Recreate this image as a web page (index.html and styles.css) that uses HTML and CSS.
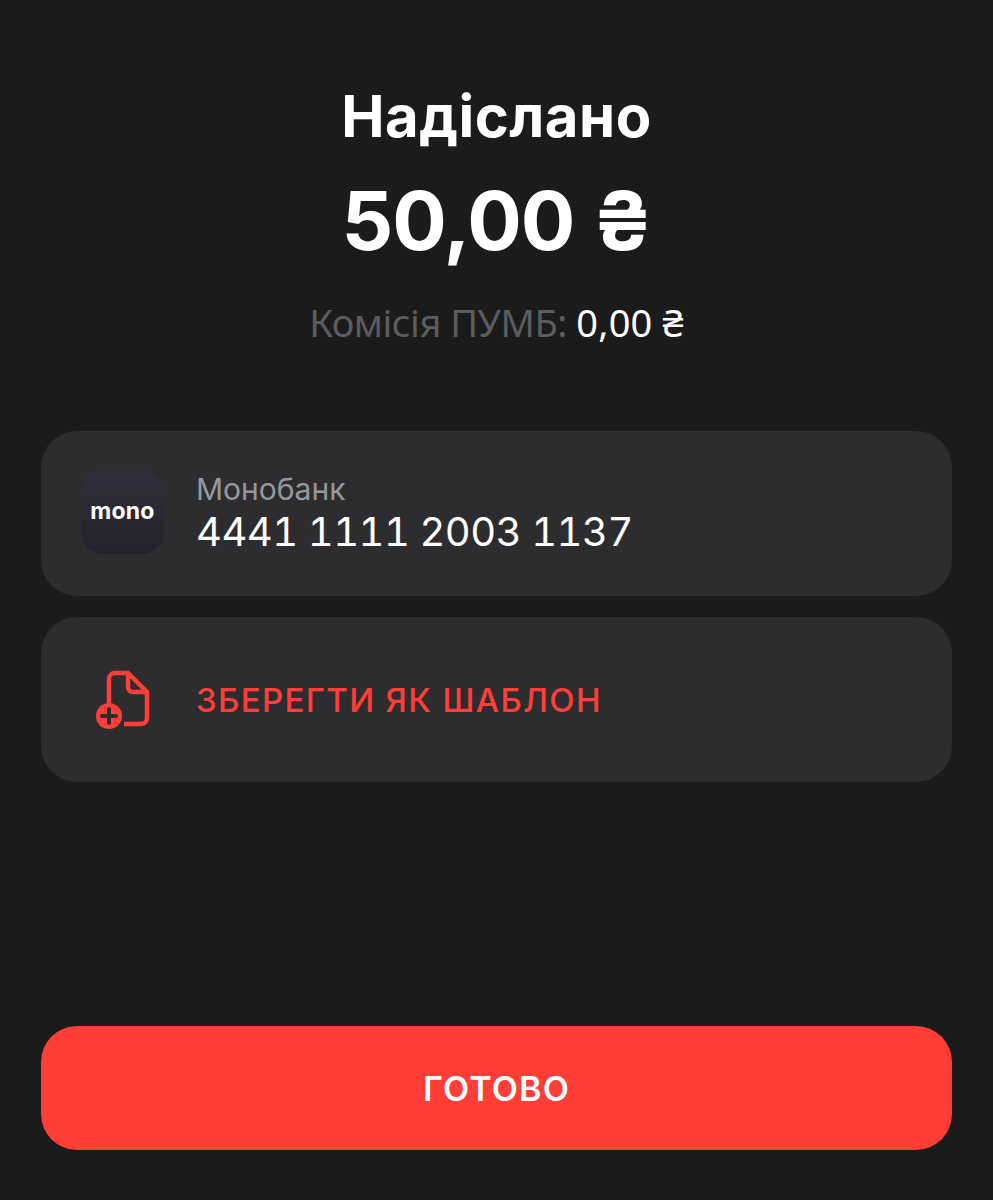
FILE: index.html
```html
<!DOCTYPE html>
<html lang="uk">
<head>
    <meta charset="UTF-8">
    <meta name="viewport" content="width=device-width, initial-scale=1.0">
    <title>Надіслано</title>
    <link rel="stylesheet" href="styles.css">
</head>
<body>
    <div class="page">
        <div class="summary">
            <h1 class="title">Надіслано</h1>
            <div class="amount">50,00 ₴</div>
            <div class="fee"><span class="fee-label">Комісія ПУМБ:</span> <span class="fee-value">0,00 ₴</span></div>
        </div>

        <div class="card">
            <div class="bank-logo"><span class="bank-logo-text">mono</span></div>
            <div class="card-text">
                <div class="bank-name">Монобанк</div>
                <div class="card-number">4441 1111 2003 1137</div>
            </div>
        </div>

        <div class="card card-action">
            <svg class="template-icon" width="56" height="60" viewBox="0 0 56 60" fill="none">
                <path d="M14 33V9a6 6 0 0 1 6-6h13l19 19v26a6 6 0 0 1-6 6H29" stroke="#ff3e38" stroke-width="4.5" stroke-linejoin="round"/>
                <path d="M33 4v13a5 5 0 0 0 5 5h13" stroke="#ff3e38" stroke-width="4.5" stroke-linejoin="round"/>
                <circle cx="14" cy="46" r="13" fill="#ff3e38"/>
                <path d="M14 39v14M7 46h14" stroke="#2d2d30" stroke-width="4" stroke-linecap="round"/>
            </svg>
            <div class="action-label">ЗБЕРЕГТИ ЯК ШАБЛОН</div>
        </div>

        <button class="done">ГОТОВО</button>
    </div>
</body>
</html>
```

FILE: styles.css
```css
html, body {
    margin: 0;
    background-color: #1b1b1b;
}
.page {
    height: 1200px;
    box-sizing: border-box;
    padding: 0 41px;
    display: flex;
    flex-direction: column;
    font-family: "Inter", "Liberation Sans", sans-serif;
    color: #fff;
    overflow: hidden;
}
.summary {
    height: 431px;
    padding-top: 81px;
    box-sizing: border-box;
    text-align: center;
    flex: none;
}
.title {
    margin: 0;
    font-size: 58px;
    line-height: 70px;
    font-weight: 700;
    letter-spacing: 0.5px;
}
.amount {
    margin-top: 22px;
    font-size: 81px;
    line-height: 96px;
    font-weight: 700;
    letter-spacing: -1px;
}
.fee {
    margin-top: 28px;
    font-family: "Noto Sans", sans-serif;
    font-size: 38px;
    line-height: 50px;
    letter-spacing: -0.5px;
}
.fee-label {
    color: #5b5c5f;
}
.fee-value {
    letter-spacing: 0.2px;
}
.card {
    height: 165px;
    flex: none;
    margin-bottom: 21px;
    padding: 0 40px;
    box-sizing: border-box;
    border-radius: 36px;
    background-color: #2d2d30;
    display: flex;
    align-items: center;
}
.bank-logo {
    width: 83px;
    height: 83px;
    flex: none;
    margin-right: 32px;
    margin-top: -2px;
    border-radius: 22px;
    background: linear-gradient(180deg, #30303c, #22222a);
    display: flex;
    align-items: center;
    justify-content: center;
}
.bank-logo-text {
    margin-top: -4px;
    font-size: 23px;
    font-weight: 700;
    letter-spacing: 0.2px;
}
.bank-name {
    font-size: 30px;
    line-height: 36px;
    color: #98989c;
}
.card-number {
    font-size: 40px;
    line-height: 50px;
    font-variant-numeric: tabular-nums;
    letter-spacing: -0.55px;
}
.card-action {
    padding-left: 54px;
}
.template-icon {
    flex: none;
    margin-right: 45px;
}
.action-label {
    font-size: 33px;
    font-weight: 500;
    letter-spacing: 1.35px;
    color: #ff3e38;
}
.done {
    margin-top: 223px;
    height: 124px;
    flex: none;
    border: none;
    border-radius: 36px;
    background-color: #ff3e38;
    color: #fff;
    font-family: inherit;
    font-size: 34px;
    font-weight: 600;
    letter-spacing: 1.2px;
}
```
